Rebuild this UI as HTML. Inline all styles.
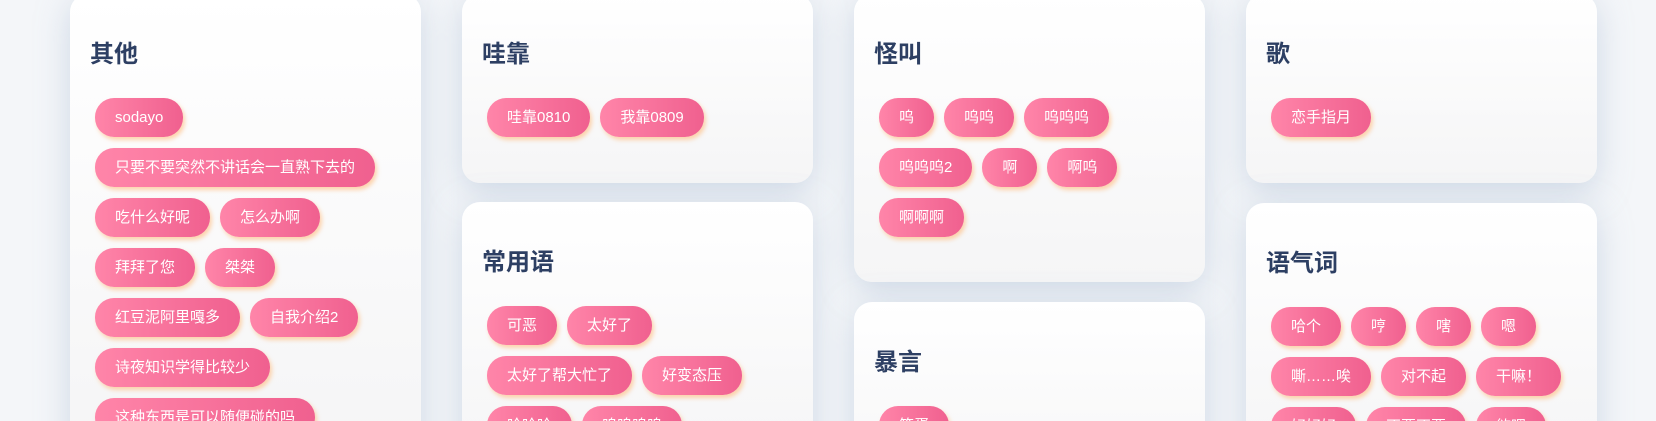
<!DOCTYPE html>
<html><head><meta charset="utf-8"><style>
*{box-sizing:border-box;margin:0;padding:0}
html,body{width:1656px;height:421px;overflow:hidden}
body{background:#f4f6f9;font-family:"Liberation Sans","Noto Sans CJK SC",sans-serif;position:relative}
.card{position:absolute;width:351px;border-radius:18px;background:linear-gradient(180deg,#ffffff 0%,#f5f5f6 100%);box-shadow:0 8px 32px rgba(170,188,212,.5);padding:46px 20px 35px 20px}
.card h2{font-size:24px;line-height:30px;font-weight:bold;color:#2d3f63;margin-bottom:28px}
.btns{padding-left:5px;display:flex;flex-wrap:wrap}
.b{height:39px;line-height:39px;padding:0 20px;border-radius:19px;margin:0 10px 11px 0;color:#fff;font-size:15px;background:linear-gradient(90deg,#ff85a9,#f0608f);box-shadow:2px 3px 4px rgba(255,185,120,.6);white-space:nowrap}
</style></head><body>
<div class="card" style="left:70px;top:-6px;height:460px"><h2>其他</h2><div class="btns">
<span class="b">sodayo</span><span class="b">只要不要突然不讲话会一直熟下去的</span><span class="b">吃什么好呢</span><span class="b">怎么办啊</span><span class="b">拜拜了您</span><span class="b">桀桀</span><span class="b">红豆泥阿里嘎多</span><span class="b">自我介绍2</span><span class="b">诗夜知识学得比较少</span><span class="b">这种东西是可以随便碰的吗</span></div></div>

<div class="card" style="left:462px;top:-6px;height:189px"><h2>哇靠</h2><div class="btns"><span class="b">哇靠0810</span><span class="b">我靠0809</span></div></div>
<div class="card" style="left:462px;top:202px;height:260px"><h2>常用语</h2><div class="btns"><span class="b">可恶</span><span class="b">太好了</span><span class="b">太好了帮大忙了</span><span class="b">好变态压</span><span class="b">哈哈哈</span><span class="b">呜呜呜呜</span><span class="b">好耶好耶</span></div></div>

<div class="card" style="left:854px;top:-6px;height:288px"><h2>怪叫</h2><div class="btns"><span class="b">呜</span><span class="b">呜呜</span><span class="b">呜呜呜</span><span class="b">呜呜呜2</span><span class="b">啊</span><span class="b">啊呜</span><span class="b">啊啊啊</span></div></div>
<div class="card" style="left:854px;top:302px;height:200px"><h2>暴言</h2><div class="btns"><span class="b">笨蛋</span></div></div>

<div class="card" style="left:1246px;top:-6px;height:189px"><h2>歌</h2><div class="btns"><span class="b">恋手指月</span></div></div>
<div class="card" style="left:1246px;top:203px;height:260px"><h2>语气词</h2><div class="btns"><span class="b">哈个</span><span class="b">哼</span><span class="b">嗐</span><span class="b">嗯</span><span class="b">嘶……唉</span><span class="b">对不起</span><span class="b">干嘛！</span><span class="b">好好好</span><span class="b">不要不要</span><span class="b">欸嘿</span></div></div>
</body></html>
